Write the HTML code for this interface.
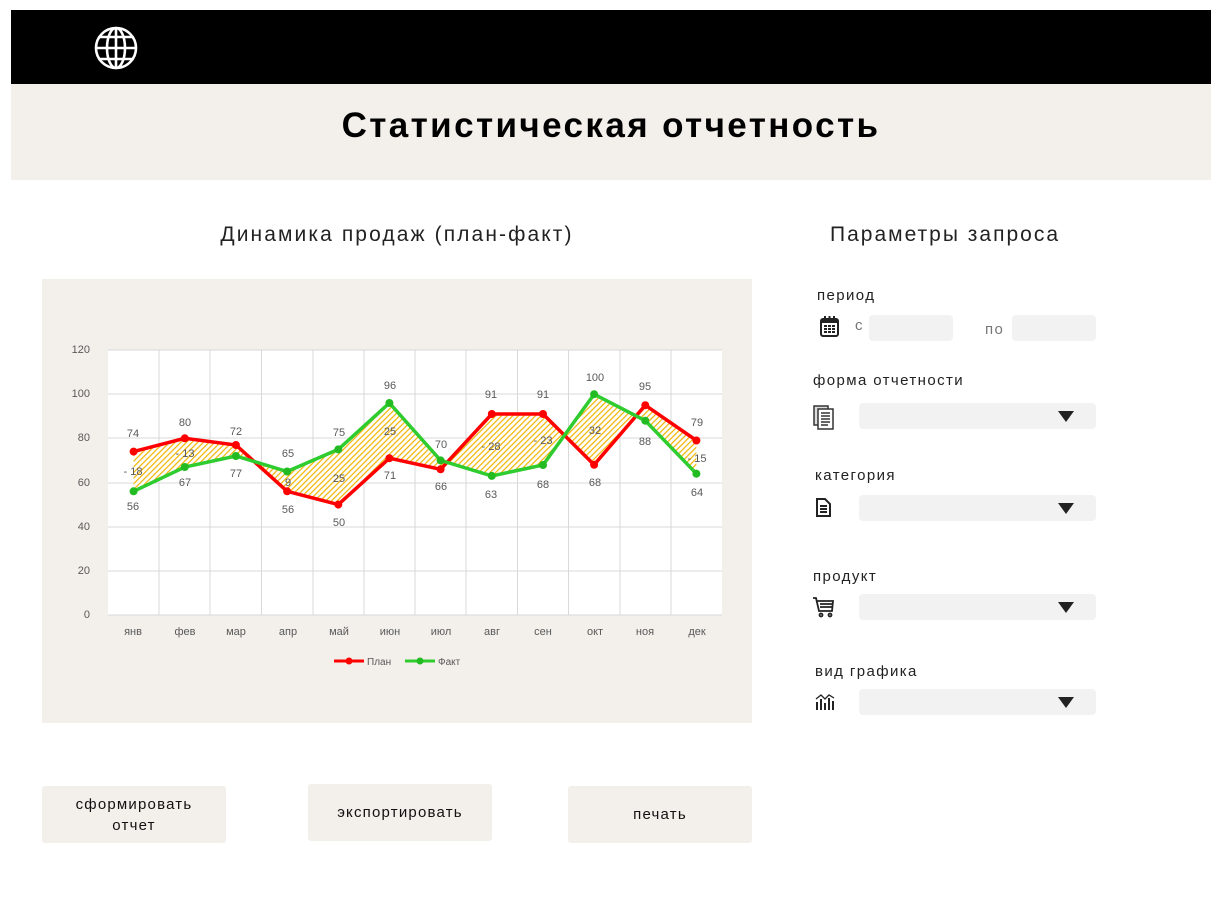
<!DOCTYPE html>
<html><head><meta charset="utf-8"><style>
body{margin:0;width:1224px;height:910px;background:#fff;position:relative;font-family:"Liberation Sans","DejaVu Sans",sans-serif;overflow:hidden}
.abs{position:absolute}
.lbl{position:absolute;font-size:15px;color:#222;letter-spacing:1.4px}
.sel{position:absolute;left:859px;width:237px;height:26px;background:#f2f2f2;border-radius:4px}
.sel:after{content:"";position:absolute;right:22px;top:8px;border-left:8px solid transparent;border-right:8px solid transparent;border-top:11px solid #222}
.btn{position:absolute;background:#f3f0eb;border-radius:3px;font-size:15px;color:#111;display:flex;align-items:center;justify-content:center;text-align:center;line-height:21px;letter-spacing:1.2px}
</style></head><body>
<div class="abs" style="left:11px;top:10px;width:1200px;height:74px;background:#000"></div>
<svg class="abs" style="left:93px;top:25px" width="46" height="46" viewBox="0 0 46 46" fill="none" stroke="#fff" stroke-width="2.6">
<circle cx="23" cy="23" r="20"/><ellipse cx="23" cy="23" rx="9" ry="20"/><line x1="23" y1="3" x2="23" y2="43"/><line x1="3" y1="23" x2="43" y2="23"/><path d="M7 12H39M7 34H39"/></svg>
<div class="abs" style="left:11px;top:84px;width:1200px;height:96px;background:#f3f0eb"></div>
<div class="abs" style="left:11px;top:106px;width:1200px;text-align:center;font-size:35px;font-weight:bold;color:#000;letter-spacing:2.4px">Статистическая отчетность</div>
<div class="abs" style="left:42px;top:223px;width:710px;text-align:center;font-size:21px;color:#222;letter-spacing:2.1px">Динамика продаж (план-факт)</div>
<div class="abs" style="left:790px;top:223px;width:310px;text-align:center;font-size:21px;color:#222;letter-spacing:2px">Параметры запроса</div>
<div class="abs" style="left:42px;top:279px;width:710px;height:444px;background:#f3f0eb"></div>
<svg class="abs" style="left:0;top:0" width="1224" height="910" font-family="Liberation Sans, sans-serif" font-size="11" fill="#595959">
<defs><pattern id="h" width="4" height="4" patternUnits="userSpaceOnUse" patternTransform="rotate(45)"><rect width="4" height="4" fill="#fff"/><rect width="1.2" height="4" fill="#f0b400"/></pattern></defs>
<rect x="108" y="350" width="614" height="265" fill="#fff"/>
<g stroke="#d9d9d9" stroke-width="1">
<line x1="108" y1="350" x2="722" y2="350"/><line x1="108" y1="394" x2="722" y2="394"/><line x1="108" y1="438" x2="722" y2="438"/><line x1="108" y1="483" x2="722" y2="483"/><line x1="108" y1="527" x2="722" y2="527"/><line x1="108" y1="571" x2="722" y2="571"/><line x1="108" y1="615" x2="722" y2="615"/>
<line x1="159" y1="350" x2="159" y2="615"/><line x1="210" y1="350" x2="210" y2="615"/><line x1="261.5" y1="350" x2="261.5" y2="615"/><line x1="313" y1="350" x2="313" y2="615"/><line x1="364" y1="350" x2="364" y2="615"/><line x1="415" y1="350" x2="415" y2="615"/><line x1="466" y1="350" x2="466" y2="615"/><line x1="517.5" y1="350" x2="517.5" y2="615"/><line x1="568.5" y1="350" x2="568.5" y2="615"/><line x1="620" y1="350" x2="620" y2="615"/><line x1="671" y1="350" x2="671" y2="615"/>
</g>
<polygon fill="url(#h)" points="133.6,451.6 184.8,438.3 235.9,445 287.1,491.3 338.3,504.6 389.4,458.2 440.6,469.3 491.8,414 543,414 594.1,464.8 645.3,405.2 696.4,440.5 696.4,473.7 645.3,420.7 594.1,394.2 543,465 491.8,475.9 440.6,460.4 389.4,403 338.3,449.4 287.1,471.5 235.9,456 184.8,467 133.6,491.3"/>
<polyline fill="none" stroke="#ff0000" stroke-width="3.5" points="133.6,451.6 184.8,438.3 235.9,445 287.1,491.3 338.3,504.6 389.4,458.2 440.6,469.3 491.8,414 543,414 594.1,464.8 645.3,405.2 696.4,440.5"/>
<polyline fill="none" stroke="#2ecc2e" stroke-width="3.5" points="133.6,491.3 184.8,467 235.9,456 287.1,471.5 338.3,449.4 389.4,403 440.6,460.4 491.8,475.9 543,465 594.1,394.2 645.3,420.7 696.4,473.7"/>
<g fill="#ff0000"><circle cx="133.6" cy="451.6" r="4"/><circle cx="184.8" cy="438.3" r="4"/><circle cx="235.9" cy="445" r="4"/><circle cx="287.1" cy="491.3" r="4"/><circle cx="338.3" cy="504.6" r="4"/><circle cx="389.4" cy="458.2" r="4"/><circle cx="440.6" cy="469.3" r="4"/><circle cx="491.8" cy="414" r="4"/><circle cx="543" cy="414" r="4"/><circle cx="594.1" cy="464.8" r="4"/><circle cx="645.3" cy="405.2" r="4"/><circle cx="696.4" cy="440.5" r="4"/></g>
<g fill="#22bb22"><circle cx="133.6" cy="491.3" r="4"/><circle cx="184.8" cy="467" r="4"/><circle cx="235.9" cy="456" r="4"/><circle cx="287.1" cy="471.5" r="4"/><circle cx="338.3" cy="449.4" r="4"/><circle cx="389.4" cy="403" r="4"/><circle cx="440.6" cy="460.4" r="4"/><circle cx="491.8" cy="475.9" r="4"/><circle cx="543" cy="465" r="4"/><circle cx="594.1" cy="394.2" r="4"/><circle cx="645.3" cy="420.7" r="4"/><circle cx="696.4" cy="473.7" r="4"/></g>
<g text-anchor="end" dominant-baseline="middle"><text x="90" y="350">120</text><text x="90" y="394">100</text><text x="90" y="438">80</text><text x="90" y="483">60</text><text x="90" y="527">40</text><text x="90" y="571">20</text><text x="90" y="615">0</text></g>
<g text-anchor="middle" dominant-baseline="middle">
<text x="133" y="632">янв</text><text x="185" y="632">фев</text><text x="236" y="632">мар</text><text x="288" y="632">апр</text><text x="339" y="632">май</text><text x="390" y="632">июн</text><text x="441" y="632">июл</text><text x="492" y="632">авг</text><text x="543" y="632">сен</text><text x="595" y="632">окт</text><text x="645" y="632">ноя</text><text x="697" y="632">дек</text>
<text x="133" y="434">74</text><text x="133" y="472">- 18</text><text x="133" y="507">56</text>
<text x="185" y="423">80</text><text x="185" y="454">- 13</text><text x="185" y="483">67</text>
<text x="236" y="432">72</text><text x="236" y="474">77</text>
<text x="288" y="454">65</text><text x="288" y="483">9</text><text x="288" y="510">56</text>
<text x="339" y="433">75</text><text x="339" y="479">25</text><text x="339" y="523">50</text>
<text x="390" y="386">96</text><text x="390" y="432">25</text><text x="390" y="476">71</text>
<text x="441" y="445">70</text><text x="441" y="487">66</text>
<text x="491" y="395">91</text><text x="491" y="447">- 28</text><text x="491" y="495">63</text>
<text x="543" y="395">91</text><text x="543" y="441">- 23</text><text x="543" y="485">68</text>
<text x="595" y="378">100</text><text x="595" y="431">32</text><text x="595" y="483">68</text>
<text x="645" y="387">95</text><text x="645" y="442">88</text>
<text x="697" y="423">79</text><text x="697" y="459">- 15</text><text x="697" y="493">64</text>
</g>
<line x1="334" y1="661" x2="364" y2="661" stroke="#ff0000" stroke-width="3"/><circle cx="349" cy="661" r="3.5" fill="#ff0000"/><text x="367" y="665" font-size="10">План</text>
<line x1="405" y1="661" x2="435" y2="661" stroke="#2ecc2e" stroke-width="3"/><circle cx="420" cy="661" r="3.5" fill="#22bb22"/><text x="438" y="665" font-size="10">Факт</text>
</svg>
<div class="lbl" style="left:817px;top:287px">период</div>
<svg class="abs" style="left:820px;top:316px" width="19" height="21" viewBox="0 0 19 21"><rect x="1" y="3" width="17" height="17" rx="2" fill="#fff" stroke="#222" stroke-width="2"/><rect x="1" y="3" width="17" height="4" fill="#222"/><g fill="#222"><rect x="4" y="9" width="3" height="2"/><rect x="8" y="9" width="3" height="2"/><rect x="12" y="9" width="3" height="2"/><rect x="4" y="12" width="3" height="2"/><rect x="8" y="12" width="3" height="2"/><rect x="12" y="12" width="3" height="2"/><rect x="4" y="15" width="3" height="2"/><rect x="8" y="15" width="3" height="2"/><rect x="12" y="15" width="3" height="2"/><rect x="4" y="0" width="2" height="4"/><rect x="8.5" y="0" width="2" height="4"/><rect x="13" y="0" width="2" height="4"/></g></svg>
<div class="lbl" style="left:855px;top:317px;color:#777">с</div>
<div class="abs" style="left:869px;top:315px;width:84px;height:26px;background:#f2f2f2;border-radius:4px"></div>
<div class="lbl" style="left:985px;top:321px;color:#777">по</div>
<div class="abs" style="left:1012px;top:315px;width:84px;height:26px;background:#f2f2f2;border-radius:4px"></div>
<div class="lbl" style="left:813px;top:372px">форма отчетности</div>
<svg class="abs" style="left:813px;top:404px" width="22" height="26" viewBox="0 0 22 26" fill="none" stroke="#333" stroke-width="1.5"><rect x="1" y="2" width="14" height="19" fill="#ddd"/><rect x="5" y="5" width="15" height="20" fill="#fff"/><path d="M8 9H17M8 12H17M8 15H17M8 18H17M8 21H15"/></svg>
<div class="sel" style="top:403px"></div>
<div class="lbl" style="left:815px;top:467px">категория</div>
<svg class="abs" style="left:815px;top:497px" width="17" height="21" viewBox="0 0 17 21" fill="none" stroke="#222" stroke-width="2"><path d="M2 2H10L15 7V19H2Z"/><path d="M5 9H12M5 12H12M5 15H12"/></svg>
<div class="sel" style="top:495px"></div>
<div class="lbl" style="left:813px;top:568px">продукт</div>
<svg class="abs" style="left:812px;top:596px" width="23" height="22" viewBox="0 0 23 22" fill="none" stroke="#222" stroke-width="1.8"><path d="M1 2H4L7 15H20L21 5H5M8 8H20M8 11H20"/><circle cx="9" cy="19" r="1.5"/><circle cx="18" cy="19" r="1.5"/></svg>
<div class="sel" style="top:594px"></div>
<div class="lbl" style="left:815px;top:663px">вид графика</div>
<svg class="abs" style="left:815px;top:694px" width="21" height="17" viewBox="0 0 21 17" fill="#222"><rect x="1" y="8" width="2" height="8"/><rect x="5" y="5" width="2" height="11"/><rect x="9" y="9" width="2" height="7"/><rect x="13" y="4" width="2" height="12"/><rect x="17" y="7" width="2" height="9"/><path d="M1 5L6 1L10 5L14 1L19 4" fill="none" stroke="#222" stroke-width="1.3"/></svg>
<div class="sel" style="top:689px"></div>
<div class="btn" style="left:42px;top:786px;width:184px;height:57px">сформировать<br>отчет</div>
<div class="btn" style="left:308px;top:784px;width:184px;height:57px">экспортировать</div>
<div class="btn" style="left:568px;top:786px;width:184px;height:57px">печать</div>
</body></html>
